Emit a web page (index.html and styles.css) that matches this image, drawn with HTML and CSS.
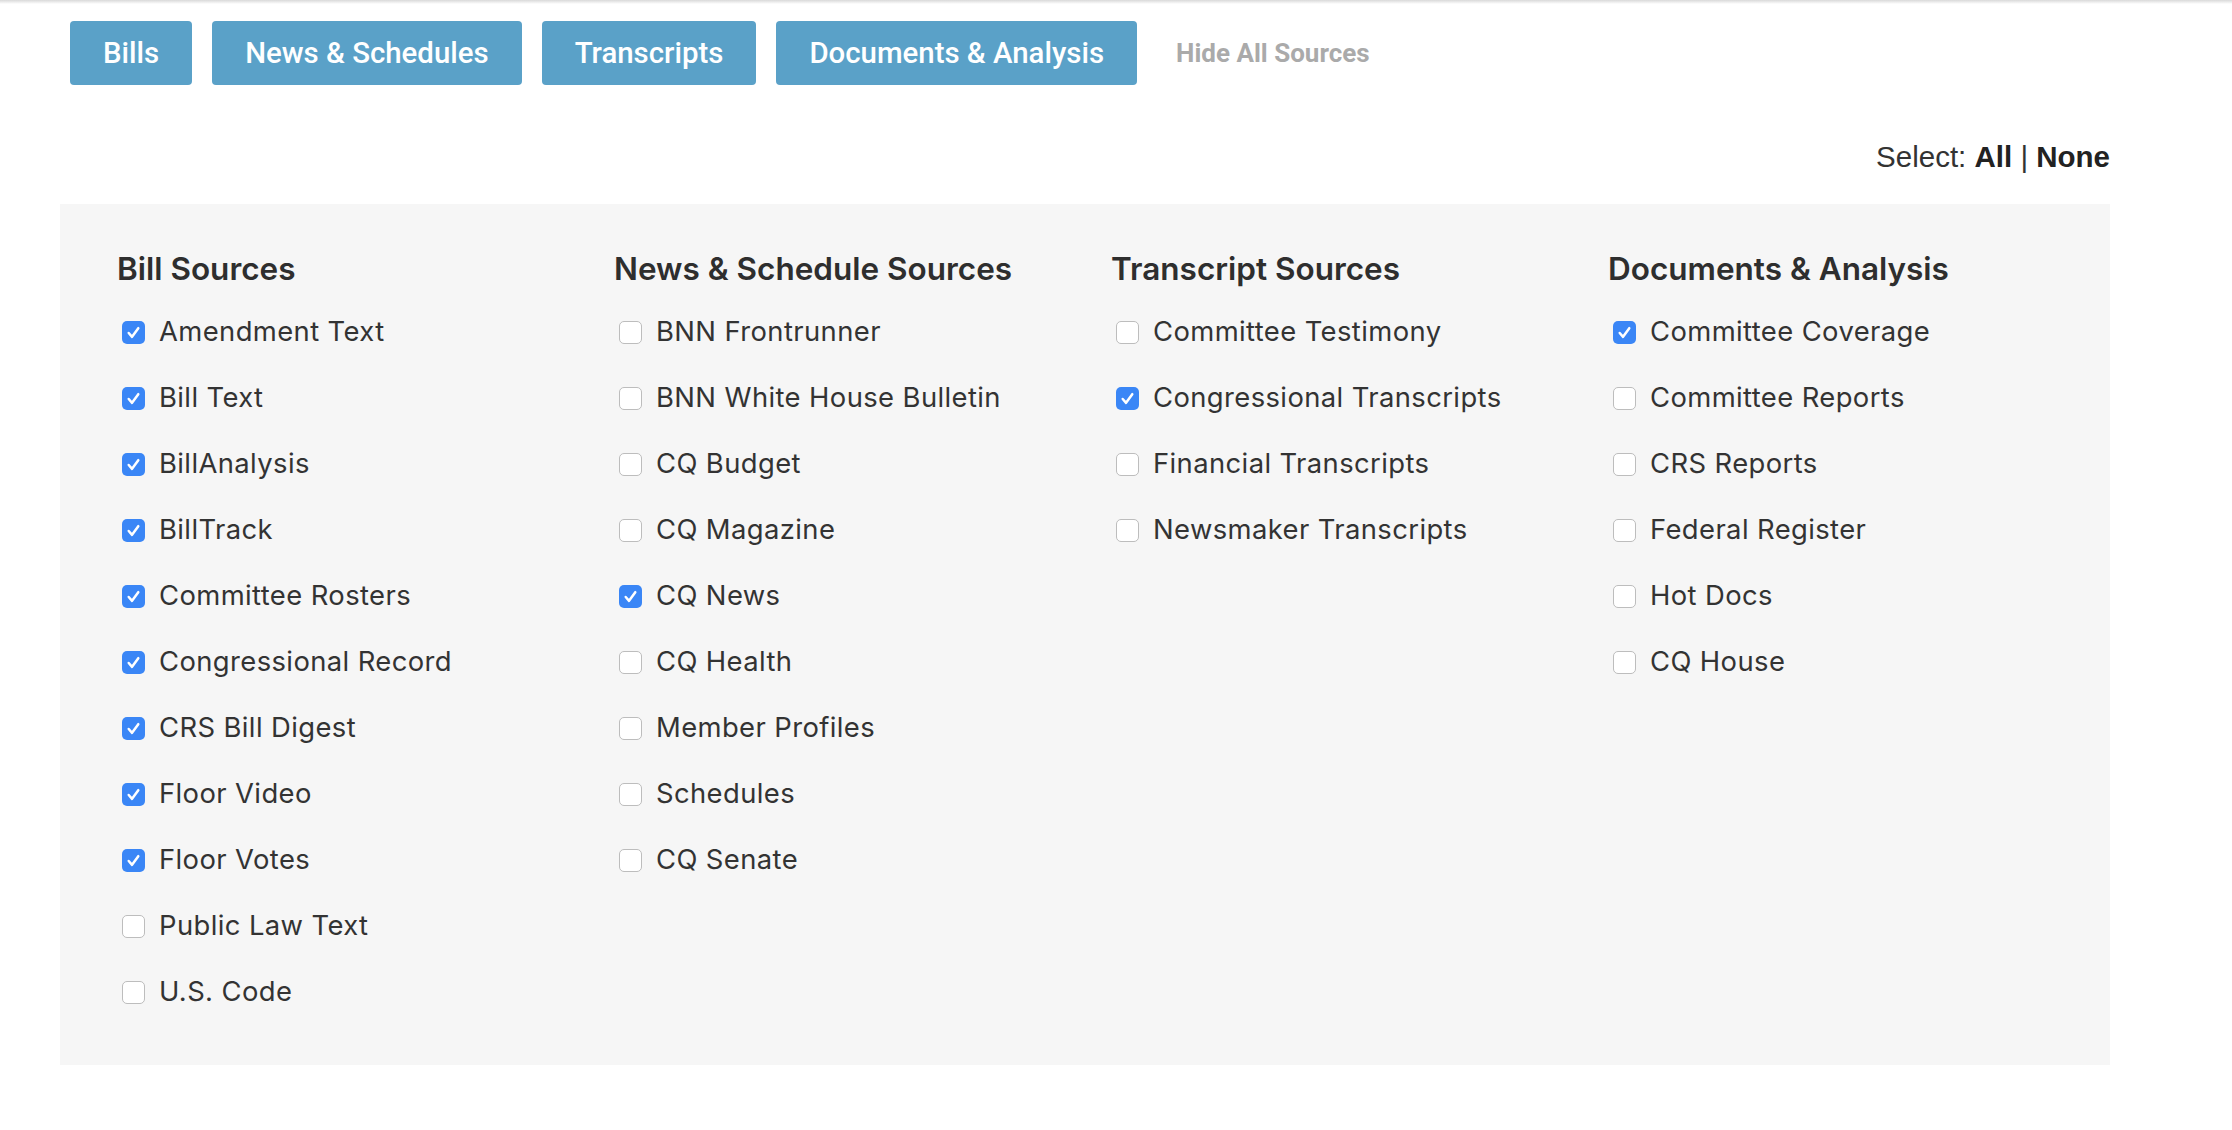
FILE: index.html
```html
<!DOCTYPE html>
<html lang="en">
<head>
    <meta charset="UTF-8">
    <meta name="viewport" content="width=device-width, initial-scale=1.0">
    <link rel="stylesheet" href="styles.css">
    <title>Sources</title>
</head>
<body>
    <div class="top-shadow"></div>

    <div class="tabs">
        <button class="tab">Bills</button>
        <button class="tab">News &amp; Schedules</button>
        <button class="tab">Transcripts</button>
        <button class="tab">Documents &amp; Analysis</button>
        <a class="hide-link" href="#">Hide All Sources</a>
    </div>

    <div class="select-row">
        Select: <a href="#">All</a> | <a href="#">None</a>
    </div>

    <div class="sources">
        <!-- Bills -->
        <div class="source-col">
            <h3>Bill Sources</h3>
            <label class="source"><span class="box checked"><svg viewBox="0 0 24 24"><path d="M7 12.5l3.5 4L17 7.5"/></svg></span>Amendment Text</label>
            <label class="source"><span class="box checked"><svg viewBox="0 0 24 24"><path d="M7 12.5l3.5 4L17 7.5"/></svg></span>Bill Text</label>
            <label class="source"><span class="box checked"><svg viewBox="0 0 24 24"><path d="M7 12.5l3.5 4L17 7.5"/></svg></span>BillAnalysis</label>
            <label class="source"><span class="box checked"><svg viewBox="0 0 24 24"><path d="M7 12.5l3.5 4L17 7.5"/></svg></span>BillTrack</label>
            <label class="source"><span class="box checked"><svg viewBox="0 0 24 24"><path d="M7 12.5l3.5 4L17 7.5"/></svg></span>Committee Rosters</label>
            <label class="source"><span class="box checked"><svg viewBox="0 0 24 24"><path d="M7 12.5l3.5 4L17 7.5"/></svg></span>Congressional Record</label>
            <label class="source"><span class="box checked"><svg viewBox="0 0 24 24"><path d="M7 12.5l3.5 4L17 7.5"/></svg></span>CRS Bill Digest</label>
            <label class="source"><span class="box checked"><svg viewBox="0 0 24 24"><path d="M7 12.5l3.5 4L17 7.5"/></svg></span>Floor Video</label>
            <label class="source"><span class="box checked"><svg viewBox="0 0 24 24"><path d="M7 12.5l3.5 4L17 7.5"/></svg></span>Floor Votes</label>
            <label class="source"><span class="box"></span>Public Law Text</label>
            <label class="source"><span class="box"></span>U.S. Code</label>
        </div>

        <!-- News -->
        <div class="source-col">
            <h3>News &amp; Schedule Sources</h3>
            <label class="source"><span class="box"></span>BNN Frontrunner</label>
            <label class="source"><span class="box"></span>BNN White House Bulletin</label>
            <label class="source"><span class="box"></span>CQ Budget</label>
            <label class="source"><span class="box"></span>CQ Magazine</label>
            <label class="source"><span class="box checked"><svg viewBox="0 0 24 24"><path d="M7 12.5l3.5 4L17 7.5"/></svg></span>CQ News</label>
            <label class="source"><span class="box"></span>CQ Health</label>
            <label class="source"><span class="box"></span>Member Profiles</label>
            <label class="source"><span class="box"></span>Schedules</label>
            <label class="source"><span class="box"></span>CQ Senate</label>
        </div>

        <!-- Transcripts -->
        <div class="source-col">
            <h3>Transcript Sources</h3>
            <label class="source"><span class="box"></span>Committee Testimony</label>
            <label class="source"><span class="box checked"><svg viewBox="0 0 24 24"><path d="M7 12.5l3.5 4L17 7.5"/></svg></span>Congressional Transcripts</label>
            <label class="source"><span class="box"></span>Financial Transcripts</label>
            <label class="source"><span class="box"></span>Newsmaker Transcripts</label>
        </div>

        <!-- Documents -->
        <div class="source-col">
            <h3>Documents &amp; Analysis</h3>
            <label class="source"><span class="box checked"><svg viewBox="0 0 24 24"><path d="M7 12.5l3.5 4L17 7.5"/></svg></span>Committee Coverage</label>
            <label class="source"><span class="box"></span>Committee Reports</label>
            <label class="source"><span class="box"></span>CRS Reports</label>
            <label class="source"><span class="box"></span>Federal Register</label>
            <label class="source"><span class="box"></span>Hot Docs</label>
            <label class="source"><span class="box"></span>CQ House</label>
        </div>
    </div>
</body>
</html>
```

FILE: styles.css
```css
/* Base */
body {
    margin: 0;
    background: #ffffff;
    color: #333;
    font-family: Inter, "Noto Sans", sans-serif;
}

/* thin shadow left by the header above */
.top-shadow {
    height: 4px;
    background: linear-gradient(#d9d9d9, #ffffff);
}

/* Tab buttons */
.tabs {
    display: flex;
    align-items: center;
    gap: 20px;
    margin-top: 17px;
    padding-left: 70px;
}

.tab {
    height: 64px;
    padding: 0 33px;
    border: none;
    border-radius: 4px;
    background-color: #5aa1c8;
    color: #fff;
    font-family: Roboto, sans-serif;
    font-size: 29.4px;
    font-weight: 500;
    cursor: pointer;
}

.hide-link {
    margin-left: 19px;
    color: #aaaaaa;
    font-family: Roboto, sans-serif;
    font-size: 26px;
    font-weight: 700;
    text-decoration: none;
}

/* Select all / none */
.select-row {
    width: 2050px;
    margin: 55px 0 0 60px;
    text-align: right;
    font-family: "Liberation Sans", Arial, sans-serif;
    font-size: 29.5px;
    line-height: 34px;
    color: #333;
}

.select-row a {
    color: #222;
    font-weight: 700;
    text-decoration: none;
}

/* Sources panel */
.sources {
    display: grid;
    grid-template-columns: repeat(4, 497px);
    width: 2050px;
    box-sizing: border-box;
    margin: 30px 0 0 60px;
    padding: 45px 0 41px 57px;
    background: #f6f6f6;
}

.source-col h3 {
    margin: 0 0 9px;
    font-size: 31.5px;
    line-height: 40px;
    font-weight: 600;
    color: #2e2e2e;
}

.source {
    display: flex;
    align-items: center;
    height: 66px;
    font-size: 27.4px;
    letter-spacing: 0.4px;
    color: #333;
}

.box {
    width: 23px;
    height: 23px;
    box-sizing: border-box;
    margin: 2px 14px 0 5px;
    border: 1.5px solid #bdbdbd;
    border-radius: 5px;
    background: #fff;
    flex-shrink: 0;
}

.box.checked {
    border: none;
    background: #3a86f6;
}

.box svg {
    display: block;
    width: 23px;
    height: 23px;
    fill: none;
    stroke: #fff;
    stroke-width: 2.6;
    stroke-linecap: round;
    stroke-linejoin: round;
}
```
